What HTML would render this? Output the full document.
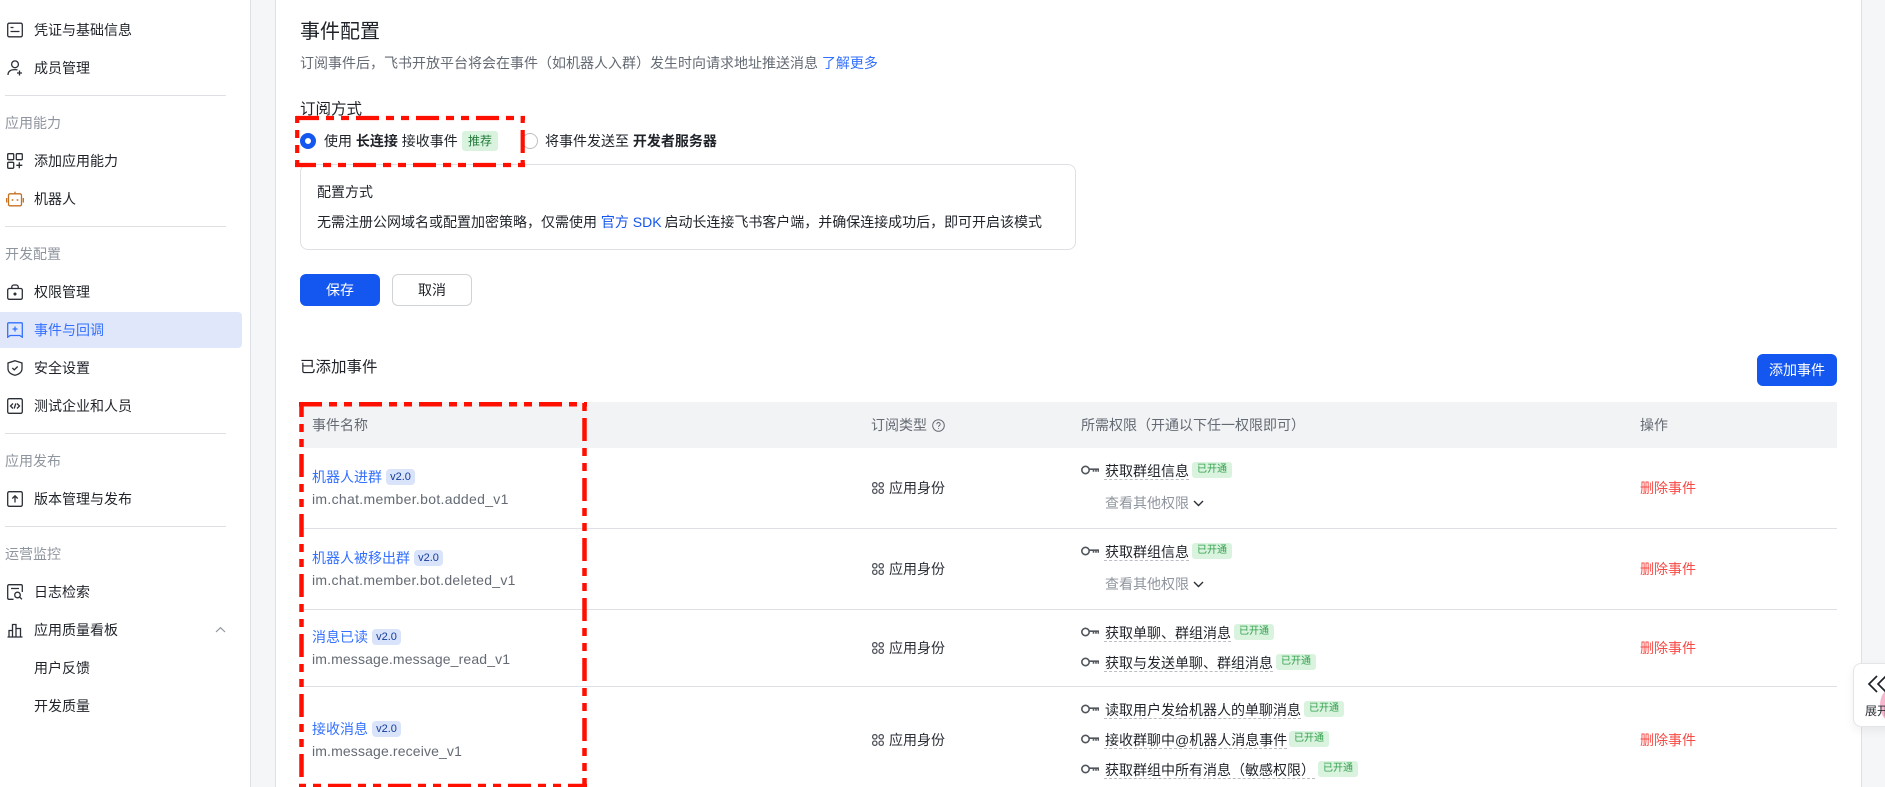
<!DOCTYPE html>
<html lang="zh"><head><meta charset="utf-8"><title>事件配置</title>
<style>
*{box-sizing:border-box}
html,body{margin:0;padding:0;width:1885px;height:787px;overflow:hidden}
body{background:#f5f6f8;font-family:"Liberation Sans","Noto Sans CJK SC",sans-serif;font-size:14px;color:#1f2329}
#w{position:relative;width:1885px;height:787px;overflow:hidden;background:#f5f6f8;filter:blur(.3px)}
.a{position:absolute}
.t{position:absolute;white-space:nowrap;line-height:22px;height:22px}
.g{color:#8f959e}
.s{color:#646a73}
.b{color:#3370ff}
.r{color:#f54a45}
.hr{position:absolute;background:#dee0e3;height:1px}
svg.i{position:absolute;width:16px;height:16px;left:7px;fill:none;stroke:#2b2f36;stroke-width:1.3}
.k{position:absolute;width:18px;height:10px;left:1081px;fill:none;stroke:#51565d;stroke-width:1.6}
.u{position:absolute;width:12px;height:12px;left:872px;fill:none;stroke:#51565d;stroke-width:1.3}
.d{border-bottom:1px dashed #bbbfc4;height:18px;line-height:18px}
.o{position:absolute;height:16px;line-height:16px;width:40px;background:#d9f3df;color:#35a14e;border-radius:3px;font-size:10px;text-align:center}
.v{position:absolute;height:16px;line-height:16px;width:29px;background:#d9e3fa;color:#133c9a;border-radius:4px;font-size:11px;text-align:center}
</style></head><body>
<div id="w">

<!-- sidebar -->
<div class="a" style="left:0;top:0;width:251px;height:787px;background:#fff;border-right:1px solid #dee0e3"></div>
<div class="a" style="left:0;top:312px;width:242px;height:36px;background:#e1e7fb;border-radius:0 4px 4px 0"></div>

<svg class="i" style="top:22px" viewBox="0 0 16 16"><rect x=".7" y="1.2" width="14.6" height="13.6" rx="1.5"/><path d="M3.5 5.5h3M3.5 9.5h9"/></svg>
<div class="t" style="left:34px;top:19px">凭证与基础信息</div>
<svg class="i" style="top:60px" viewBox="0 0 16 16"><circle cx="8" cy="4.3" r="3.4"/><path d="M1 15c0-3.8 2.6-5.4 7-5.4 1 0 1.8.1 2.5.3M12.5 10.5v5M10 13h5"/></svg>
<div class="t" style="left:34px;top:57px">成员管理</div>
<div class="hr" style="left:5px;top:95px;width:221px"></div>
<div class="t g" style="left:5px;top:112px">应用能力</div>
<svg class="i" style="top:153px" viewBox="0 0 16 16"><rect x=".7" y=".7" width="6" height="6" rx="1"/><rect x="9.3" y=".7" width="6" height="6" rx="1"/><rect x=".7" y="9.3" width="6" height="6" rx="1"/><path d="M12.3 9.3v6M9.3 12.3h6"/></svg>
<div class="t" style="left:34px;top:150px">添加应用能力</div>
<svg class="i" style="top:191px;stroke:#c5701f;left:6px;width:18px" viewBox="0 0 18 16"><rect x="2.5" y="2.8" width="13" height="12" rx="1.5"/><path d="M9 .6v2.2M.7 7v4.500M17.300 7v4.500"/><path d="M6.500 8.300v1.400M11.500 8.300v1.400" stroke-width="1.700"/></svg>
<div class="t" style="left:34px;top:188px">机器人</div>
<div class="hr" style="left:5px;top:226px;width:221px"></div>
<div class="t g" style="left:5px;top:243px">开发配置</div>
<svg class="i" style="top:284px" viewBox="0 0 16 16"><rect x=".7" y="4.5" width="14.6" height="10.8" rx="1.5"/><path d="M4.8 4.500V3a2 2 0 0 1 2-2h2.400a2 2 0 0 1 2 2v1.500"/><circle cx="8" cy="10" r=".9" fill="#2b2f36"/></svg>
<div class="t" style="left:34px;top:281px">权限管理</div>
<svg class="i" style="top:322px;stroke:#3370ff" viewBox="0 0 16 16"><path d="M1.5.8h13a.8.8 0 0 1 .8.8v13.600l-2.500-1.700H3.200L.7 15.200V1.600a.8.8 0 0 1 .8-.8zM8 4.500v5M5.500 7h5"/></svg>
<div class="t b" style="left:34px;top:319px">事件与回调</div>
<svg class="i" style="top:360px" viewBox="0 0 16 16"><path d="M8 .7l7 2.300v5.500c0 3.500-3 5.800-7 6.800-4-1-7-3.300-7-6.800V3zM5.300 8l2 1.800 3.400-3.300"/></svg>
<div class="t" style="left:34px;top:357px">安全设置</div>
<svg class="i" style="top:398px" viewBox="0 0 16 16"><rect x=".7" y=".7" width="14.6" height="14.6" rx="1.5"/><path d="M6 5.500L3.500 8 6 10.500M10 5.500L12.500 8 10 10.500M8.800 5.500l-1.600 5"/></svg>
<div class="t" style="left:34px;top:395px">测试企业和人员</div>
<div class="hr" style="left:5px;top:433px;width:221px"></div>
<div class="t g" style="left:5px;top:450px">应用发布</div>
<svg class="i" style="top:491px" viewBox="0 0 16 16"><rect x=".7" y=".7" width="14.6" height="14.6" rx="1.5"/><path d="M8 11.500V5M5.300 7.500L8 4.800l2.700 2.700"/></svg>
<div class="t" style="left:34px;top:488px">版本管理与发布</div>
<div class="hr" style="left:5px;top:526px;width:221px"></div>
<div class="t g" style="left:5px;top:543px">运营监控</div>
<svg class="i" style="top:584px" viewBox="0 0 16 16"><path d="M6.500 15.300H2a1.300 1.300 0 0 1-1.300-1.300V2A1.300 1.300 0 0 1 2 .7h12A1.300 1.300 0 0 1 15.300 2v6M4 4.500h8"/><circle cx="10.500" cy="11" r="2.800"/><path d="M12.500 13l2.500 2.300"/></svg>
<div class="t" style="left:34px;top:581px">日志检索</div>
<svg class="i" style="top:622px" viewBox="0 0 16 16"><path d="M.5 15h15M2 15V8.500h3.500V15M5.500 15V2.500H9V15M9 15V6.500h4.500V15"/></svg>
<div class="t" style="left:34px;top:619px">应用质量看板</div>
<svg class="a" style="left:215px;top:626px;width:11px;height:8px" viewBox="0 0 11 8" fill="none" stroke="#8f959e" stroke-width="1.2"><path d="M1 6l4.500-4.300L10 6"/></svg>
<div class="t" style="left:34px;top:657px">用户反馈</div>
<div class="t" style="left:34px;top:695px">开发质量</div>

<!-- main card -->
<div class="a" style="left:275px;top:-2px;width:1587px;height:800px;background:#fff;border:1px solid #dee0e3"></div>

<div class="t" style="left:300px;top:21px;font-size:20px">事件配置</div>
<div class="t s" style="left:300px;top:52px">订阅事件后，飞书开放平台将会在事件（如机器人入群）发生时向请求地址推送消息 <span class="b">了解更多</span></div>
<div class="t" style="left:300px;top:99px;font-size:15.5px">订阅方式</div>

<div class="a" style="left:300px;top:133px;width:16px;height:16px;border-radius:50%;border:5px solid #1456f0;background:#fff"></div>
<div class="t" style="left:324px;top:130px">使用 <b>长连接</b> 接收事件</div>
<div class="a" style="left:462px;top:131px;width:36px;height:20px;line-height:20px;text-align:center;background:#d9f3df;color:#237b3a;font-size:12px;border-radius:3px">推荐</div>
<div class="a" style="left:522px;top:133px;width:16px;height:16px;border-radius:50%;border:1px solid #bbbfc4;background:#fff"></div>
<div class="t" style="left:545px;top:130px">将事件发送至 <b>开发者服务器</b></div>

<div class="a" style="left:300px;top:164px;width:776px;height:86px;border:1px solid #dee0e3;border-radius:8px"></div>
<div class="t" style="left:317px;top:181px">配置方式</div>
<div class="t" style="left:317px;top:211px">无需注册公网域名或配置加密策略，仅需使用 <span style="color:#1456f0">官方 SDK</span> <span style="margin-left:-1px;letter-spacing:-.02px">启动长连接飞书客户端，并确保连接成功后，即可开启该模式</span></div>

<div class="a" style="left:300px;top:274px;width:80px;height:32px;line-height:32px;text-align:center;background:#1456f0;color:#fff;border-radius:6px">保存</div>
<div class="a" style="left:392px;top:274px;width:80px;height:32px;line-height:30px;text-align:center;border:1px solid #d0d3d6;border-radius:6px">取消</div>

<div class="t" style="left:300px;top:357px;font-size:15.5px">已添加事件</div>
<div class="a" style="left:1757px;top:354px;width:80px;height:32px;line-height:32px;text-align:center;background:#1456f0;color:#fff;border-radius:6px">添加事件</div>

<!-- table -->
<div class="a" style="left:300px;top:402px;width:1537px;height:46px;background:#f2f3f5"></div>
<div class="t s" style="left:312px;top:414px">事件名称</div>
<div class="t s" style="left:871px;top:414px">订阅类型</div>
<svg class="a" style="left:932px;top:419px;width:13px;height:13px" viewBox="0 0 13 13" fill="none" stroke="#646a73" stroke-width="1"><circle cx="6.5" cy="6.500" r="5.800"/><path d="M4.800 5.200a1.700 1.700 0 1 1 2.600 1.400c-.6.400-.9.700-.9 1.300"/><path d="M6.500 9.200v.8"/></svg>
<div class="t s" style="left:1081px;top:414px">所需权限（开通以下任一权限即可）</div>
<div class="t s" style="left:1640px;top:414px">操作</div>

<div class="hr" style="left:300px;top:528px;width:1537px"></div>
<div class="hr" style="left:300px;top:609px;width:1537px"></div>
<div class="hr" style="left:300px;top:686px;width:1537px"></div>

<!-- name column -->
<div class="t b" style="left:312px;top:466px">机器人进群</div><div class="v" style="left:386px;top:469px">v2.0</div>
<div class="t s" style="left:312px;top:488px;letter-spacing:.31px">im.chat.member.bot.added_v1</div>
<div class="t b" style="left:312px;top:547px">机器人被移出群</div><div class="v" style="left:414px;top:550px">v2.0</div>
<div class="t s" style="left:312px;top:569px;letter-spacing:.29px">im.chat.member.bot.deleted_v1</div>
<div class="t b" style="left:312px;top:626px">消息已读</div><div class="v" style="left:372px;top:629px">v2.0</div>
<div class="t s" style="left:312px;top:648px;letter-spacing:.14px">im.message.message_read_v1</div>
<div class="t b" style="left:312px;top:718px">接收消息</div><div class="v" style="left:372px;top:721px">v2.0</div>
<div class="t s" style="left:312px;top:740px;letter-spacing:.14px">im.message.receive_v1</div>

<!-- type column -->
<svg class="u" style="top:482px" viewBox="0 0 12 12"><circle cx="2.800" cy="2.800" r="2.200"/><circle cx="9.200" cy="2.800" r="2.200"/><circle cx="2.800" cy="9.200" r="2.200"/><circle cx="9.200" cy="9.200" r="2.200"/></svg>
<div class="t" style="left:889px;top:477px;color:#2b2f36">应用身份</div>
<svg class="u" style="top:563px" viewBox="0 0 12 12"><circle cx="2.800" cy="2.800" r="2.200"/><circle cx="9.200" cy="2.800" r="2.200"/><circle cx="2.800" cy="9.200" r="2.200"/><circle cx="9.200" cy="9.200" r="2.200"/></svg>
<div class="t" style="left:889px;top:558px;color:#2b2f36">应用身份</div>
<svg class="u" style="top:642px" viewBox="0 0 12 12"><circle cx="2.800" cy="2.800" r="2.200"/><circle cx="9.200" cy="2.800" r="2.200"/><circle cx="2.800" cy="9.200" r="2.200"/><circle cx="9.200" cy="9.200" r="2.200"/></svg>
<div class="t" style="left:889px;top:637px;color:#2b2f36">应用身份</div>
<svg class="u" style="top:734px" viewBox="0 0 12 12"><circle cx="2.800" cy="2.800" r="2.200"/><circle cx="9.200" cy="2.800" r="2.200"/><circle cx="2.800" cy="9.200" r="2.200"/><circle cx="9.200" cy="9.200" r="2.200"/></svg>
<div class="t" style="left:889px;top:729px;color:#2b2f36">应用身份</div>

<!-- permission column -->
<svg class="k" style="top:465px" viewBox="0 0 18 10"><circle cx="4.500" cy="5" r="3.700"/><path d="M8 4.200h10M12.500 4v2.800M15 4v2.800M17.300 4v2.800"/></svg>
<div class="t d" style="left:1104px;top:462px;padding-left:1px">获取群组信息</div><div class="o" style="left:1192px;top:462px">已开通</div>
<div class="t g" style="left:1105px;top:492px">查看其他权限</div>
<svg class="a" style="left:1193px;top:500px;width:11px;height:7px" viewBox="0 0 11 7" fill="none" stroke="#2b2f36" stroke-width="1.4"><path d="M1 1l4.500 4.500L10 1"/></svg>

<svg class="k" style="top:546px" viewBox="0 0 18 10"><circle cx="4.500" cy="5" r="3.700"/><path d="M8 4.200h10M12.500 4v2.800M15 4v2.800M17.300 4v2.800"/></svg>
<div class="t d" style="left:1104px;top:543px;padding-left:1px">获取群组信息</div><div class="o" style="left:1192px;top:543px">已开通</div>
<div class="t g" style="left:1105px;top:573px">查看其他权限</div>
<svg class="a" style="left:1193px;top:581px;width:11px;height:7px" viewBox="0 0 11 7" fill="none" stroke="#2b2f36" stroke-width="1.4"><path d="M1 1l4.500 4.500L10 1"/></svg>

<svg class="k" style="top:627px" viewBox="0 0 18 10"><circle cx="4.500" cy="5" r="3.700"/><path d="M8 4.200h10M12.500 4v2.800M15 4v2.800M17.300 4v2.800"/></svg>
<div class="t d" style="left:1104px;top:624px;padding-left:1px">获取单聊、群组消息</div><div class="o" style="left:1234px;top:624px">已开通</div>
<svg class="k" style="top:657px" viewBox="0 0 18 10"><circle cx="4.500" cy="5" r="3.700"/><path d="M8 4.200h10M12.500 4v2.800M15 4v2.800M17.300 4v2.800"/></svg>
<div class="t d" style="left:1104px;top:654px;padding-left:1px">获取与发送单聊、群组消息</div><div class="o" style="left:1276px;top:654px">已开通</div>

<svg class="k" style="top:704px" viewBox="0 0 18 10"><circle cx="4.500" cy="5" r="3.700"/><path d="M8 4.200h10M12.500 4v2.800M15 4v2.800M17.300 4v2.800"/></svg>
<div class="t d" style="left:1104px;top:701px;padding-left:1px">读取用户发给机器人的单聊消息</div><div class="o" style="left:1304px;top:701px">已开通</div>
<svg class="k" style="top:734px" viewBox="0 0 18 10"><circle cx="4.500" cy="5" r="3.700"/><path d="M8 4.200h10M12.500 4v2.800M15 4v2.800M17.300 4v2.800"/></svg>
<div class="t d" style="left:1104px;top:731px;padding-left:1px">接收群聊中@机器人消息事件</div><div class="o" style="left:1289px;top:731px">已开通</div>
<svg class="k" style="top:764px" viewBox="0 0 18 10"><circle cx="4.500" cy="5" r="3.700"/><path d="M8 4.200h10M12.500 4v2.800M15 4v2.800M17.300 4v2.800"/></svg>
<div class="t d" style="left:1104px;top:761px;padding-left:1px">获取群组中所有消息（敏感权限）</div><div class="o" style="left:1318px;top:761px">已开通</div>

<!-- action column -->
<div class="t r" style="left:1640px;top:477px">删除事件</div>
<div class="t r" style="left:1640px;top:558px">删除事件</div>
<div class="t r" style="left:1640px;top:637px">删除事件</div>
<div class="t r" style="left:1640px;top:729px">删除事件</div>

<!-- floating expand -->
<div class="a" style="left:1853px;top:663px;width:60px;height:64px;background:#fff;border:1px solid #e4e5e8;border-radius:8px;box-shadow:0 4px 10px rgba(0,0,0,.06);overflow:hidden">
<div class="a" style="left:26px;top:24px;width:24px;height:34px;border-radius:50%;background:#f6b8cf"></div>
<svg class="a" style="left:13px;top:10px;width:24px;height:20px" viewBox="0 0 24 20" fill="none" stroke="#1f2329" stroke-width="1.7"><path d="M10 2L2 10l8 8M19 2l-8 8 8 8"/></svg>
<div class="t" style="left:11px;top:36px;font-size:12px;color:#2b2f36">展开</div>
</div>

<!-- red annotations -->
<svg class="a" style="left:0;top:0;width:1885px;height:787px;pointer-events:none" viewBox="0 0 1885 787" fill="none" stroke="#fe0f00" stroke-dasharray="23 7 8 7 8 7">
<g stroke-width="4.2">
<path d="M295 118H525" stroke-dashoffset="59"/>
<path d="M295 165H525" stroke-dashoffset="2"/>
<path d="M297.200 116V167" stroke-dashoffset="16"/>
<path d="M522.700 116V167" stroke-dashoffset="46"/>
</g>
<g stroke-width="4.5">
<path d="M299 404.300H587"/>
<path d="M299 786H587" stroke-dashoffset="31"/>
<path d="M301.500 402V787" stroke-dashoffset="8"/>
<path d="M584.500 402V787" stroke-dashoffset="44"/>
</g>
</svg>
</div>
</body></html>
